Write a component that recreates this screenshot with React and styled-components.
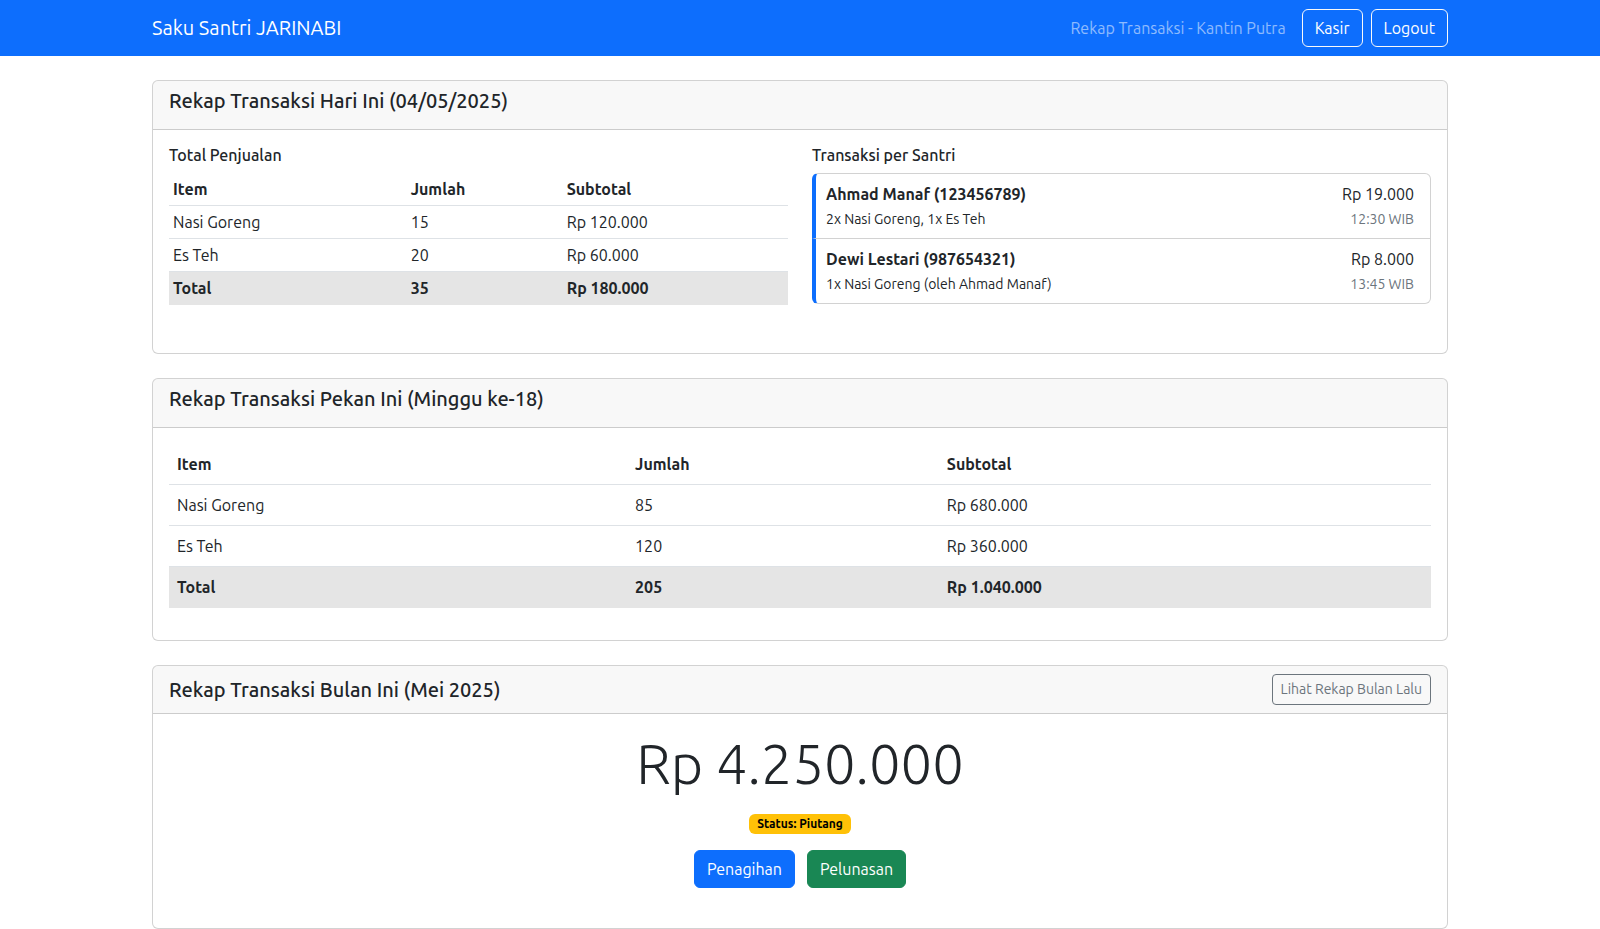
import React from 'react'
import styled, { createGlobalStyle } from 'styled-components'

const GlobalStyle = createGlobalStyle`
  * {
    box-sizing: border-box;
  }
  body {
    margin: 0;
    font-family: Ubuntu, Roboto, 'Noto Sans', sans-serif;
    font-size: 16px;
    font-weight: 400;
    line-height: 1.5;
    color: #212529;
    background: #fff;
  }
`

const Navbar = styled.nav`
  background-color: #0d6efd;
  padding: 8px 0;
`

const Container = styled.div`
  max-width: 1320px;
  margin: 0 auto;
  padding: 0 12px;
`

const NavInner = styled(Container)`
  display: flex;
  align-items: center;
  justify-content: space-between;
`

const Brand = styled.a`
  color: #fff;
  font-size: 20px;
  line-height: 30px;
  padding: 5px 0;
  text-decoration: none;
`

const NavRight = styled.div`
  display: flex;
  align-items: center;
`

const NavText = styled.span`
  color: rgba(255, 255, 255, 0.55);
  margin-right: 16px;
  padding: 8px 0;
`

const OutlineLightBtn = styled.button`
  font-family: inherit;
  font-size: 16px;
  line-height: 1.5;
  padding: 6px 12px;
  color: #fff;
  background: transparent;
  border: 1px solid #f8f9fa;
  border-radius: 6px;
  margin-left: ${(p) => (p.$first ? '0' : '8px')};
  cursor: pointer;
`

const Main = styled(Container)`
  margin-top: 24px;
`

const Card = styled.div`
  background: #fff;
  border: 1px solid rgba(0, 0, 0, 0.175);
  border-radius: 6px;
  margin-bottom: 24px;
  overflow: hidden;
`

const CardHeader = styled.div`
  padding: 8px 16px;
  background-color: rgba(33, 37, 41, 0.03);
  border-bottom: 1px solid rgba(0, 0, 0, 0.175);
  display: ${(p) => (p.$flex ? 'flex' : 'block')};
  align-items: center;
  justify-content: space-between;
`

const CardTitle = styled.h5`
  font-size: 20px;
  font-weight: 500;
  line-height: 1.2;
  margin: 0 0 ${(p) => (p.$flush ? '0' : '8px')};
`

const CardBody = styled.div`
  padding: 16px;
  text-align: ${(p) => (p.$center ? 'center' : 'left')};
`

const TwoCols = styled.div`
  display: grid;
  grid-template-columns: 1fr 1fr;
  column-gap: 24px;
  margin-bottom: 16px;
`

const SectionTitle = styled.h6`
  font-size: 16px;
  font-weight: 500;
  line-height: 1.2;
  margin: 0 0 8px;
`

const Table = styled.table`
  width: 100%;
  border-collapse: collapse;
  table-layout: fixed;
  margin-bottom: 16px;

  th,
  td {
    text-align: left;
    padding: ${(p) => (p.$sm ? '4px' : '8px')};
    border-bottom: 1px solid #dee2e6;
  }
  th {
    font-weight: 700;
  }
`

const TotalRow = styled.tr`
  background-color: #e5e5e5;
  font-weight: 700;

  td {
    border-bottom-color: #e5e5e5;
  }
`

const List = styled.div`
  display: flex;
  flex-direction: column;
  margin-bottom: 16px;
`

const ListItem = styled.div`
  display: flex;
  justify-content: space-between;
  align-items: flex-start;
  padding: 8px 16px 8px 10px;
  border: 1px solid rgba(0, 0, 0, 0.175);
  border-left: 4px solid #0d6efd;

  & + & {
    border-top: none;
  }
  &:first-child {
    border-top-left-radius: 6px;
    border-top-right-radius: 6px;
  }
  &:last-child {
    border-bottom-left-radius: 6px;
    border-bottom-right-radius: 6px;
  }
`

const ItemName = styled.div`
  font-weight: 700;
`

const ItemSmall = styled.div`
  margin-top: 3px;
  font-size: 14px;
  line-height: 1.5;
  color: ${(p) => (p.$muted ? '#6c757d' : '#212529')};
`

const ItemRight = styled.div`
  text-align: right;
`

const OutlineSecondarySm = styled.button`
  font-family: inherit;
  font-size: 14px;
  line-height: 1.5;
  padding: 4px 8px;
  color: #6c757d;
  background: transparent;
  border: 1px solid #6c757d;
  border-radius: 4px;
  cursor: pointer;
`

const BigAmount = styled.h1`
  font-size: 56px;
  font-weight: 300;
  line-height: 1.2;
  margin: 0 0 13px;
`

const BadgeLine = styled.p`
  margin: 0 0 16px;
`

const Badge = styled.span`
  display: inline-block;
  padding: 4px 8px;
  font-size: 12px;
  font-weight: 700;
  line-height: 1;
  color: #000;
  background-color: #ffc107;
  border-radius: 6px;
`

const ActionRow = styled.div`
  display: flex;
  justify-content: center;
  gap: 12px;
  margin-bottom: 24px;
`

const SolidBtn = styled.button`
  font-family: inherit;
  font-size: 16px;
  line-height: 1.5;
  padding: 6px 12px;
  color: #fff;
  background-color: ${(p) => p.$color};
  border: 1px solid ${(p) => p.$color};
  border-radius: 6px;
  cursor: pointer;
`

const today = [
  { item: 'Nasi Goreng', qty: 15, sub: 'Rp 120.000' },
  { item: 'Es Teh', qty: 20, sub: 'Rp 60.000' },
]

const week = [
  { item: 'Nasi Goreng', qty: 85, sub: 'Rp 680.000' },
  { item: 'Es Teh', qty: 120, sub: 'Rp 360.000' },
]

const santri = [
  {
    name: 'Ahmad Manaf (123456789)',
    detail: '2x Nasi Goreng, 1x Es Teh',
    amount: 'Rp 19.000',
    time: '12:30 WIB',
  },
  {
    name: 'Dewi Lestari (987654321)',
    detail: '1x Nasi Goreng (oleh Ahmad Manaf)',
    amount: 'Rp 8.000',
    time: '13:45 WIB',
  },
]

const RecapTable = ({ rows, total, sm, widths }) => (
  <Table $sm={sm}>
    <colgroup>
      {widths.map((w) => (
        <col key={w} style={{ width: w }} />
      ))}
    </colgroup>
    <thead>
      <tr>
        <th>Item</th>
        <th>Jumlah</th>
        <th>Subtotal</th>
      </tr>
    </thead>
    <tbody>
      {rows.map((r) => (
        <tr key={r.item}>
          <td>{r.item}</td>
          <td>{r.qty}</td>
          <td>{r.sub}</td>
        </tr>
      ))}
      <TotalRow>
        <td>Total</td>
        <td>{total.qty}</td>
        <td>{total.sub}</td>
      </TotalRow>
    </tbody>
  </Table>
)

const App = () => {
  return (
    <>
      <GlobalStyle />
      <Navbar>
        <NavInner>
          <Brand href='#'>Saku Santri JARINABI</Brand>
          <NavRight>
            <NavText>Rekap Transaksi - Kantin Putra</NavText>
            <OutlineLightBtn $first>Kasir</OutlineLightBtn>
            <OutlineLightBtn>Logout</OutlineLightBtn>
          </NavRight>
        </NavInner>
      </Navbar>

      <Main>
        <Card>
          <CardHeader>
            <CardTitle>Rekap Transaksi Hari Ini (04/05/2025)</CardTitle>
          </CardHeader>
          <CardBody>
            <TwoCols>
              <div>
                <SectionTitle>Total Penjualan</SectionTitle>
                <RecapTable
                  sm
                  rows={today}
                  total={{ qty: 35, sub: 'Rp 180.000' }}
                  widths={['38.4%', '25.2%', '36.4%']}
                />
              </div>
              <div>
                <SectionTitle>Transaksi per Santri</SectionTitle>
                <List>
                  {santri.map((s) => (
                    <ListItem key={s.name}>
                      <div>
                        <ItemName>{s.name}</ItemName>
                        <ItemSmall>{s.detail}</ItemSmall>
                      </div>
                      <ItemRight>
                        <div>{s.amount}</div>
                        <ItemSmall $muted>{s.time}</ItemSmall>
                      </ItemRight>
                    </ListItem>
                  ))}
                </List>
              </div>
            </TwoCols>
          </CardBody>
        </Card>

        <Card>
          <CardHeader>
            <CardTitle>Rekap Transaksi Pekan Ini (Minggu ke-18)</CardTitle>
          </CardHeader>
          <CardBody>
            <RecapTable
              rows={week}
              total={{ qty: 205, sub: 'Rp 1.040.000' }}
              widths={['36.3%', '24.7%', '39%']}
            />
          </CardBody>
        </Card>

        <Card>
          <CardHeader $flex>
            <CardTitle $flush>Rekap Transaksi Bulan Ini (Mei 2025)</CardTitle>
            <OutlineSecondarySm>Lihat Rekap Bulan Lalu</OutlineSecondarySm>
          </CardHeader>
          <CardBody $center>
            <BigAmount>Rp 4.250.000</BigAmount>
            <BadgeLine>
              <Badge>Status: Piutang</Badge>
            </BadgeLine>
            <ActionRow>
              <SolidBtn $color='#0d6efd'>Penagihan</SolidBtn>
              <SolidBtn $color='#198754'>Pelunasan</SolidBtn>
            </ActionRow>
          </CardBody>
        </Card>
      </Main>
    </>
  )
}

export default App
